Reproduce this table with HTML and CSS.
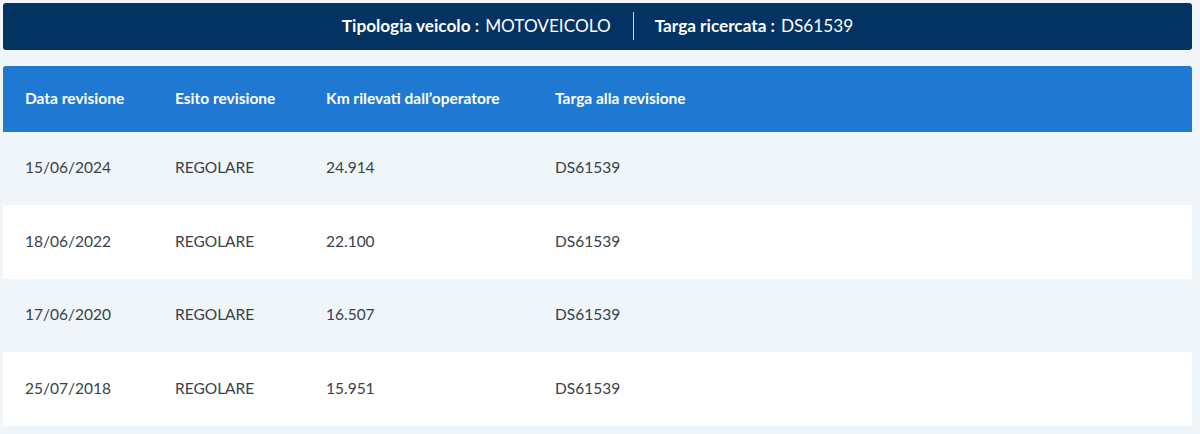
FILE: index.html
```html
<!DOCTYPE html>
<html lang="it">
<head>
<meta charset="utf-8">
<title>Revisioni</title>
<link rel="stylesheet" href="styles.css">
</head>
<body>
<div class="page">
  <div class="summary">
    <div class="summary-item"><span class="label">Tipologia veicolo :</span><span class="value">MOTOVEICOLO</span></div>
    <div class="divider"></div>
    <div class="summary-item"><span class="label">Targa ricercata :</span><span class="value">DS61539</span></div>
  </div>
  <div class="table">
    <div class="row head">
      <div class="cell">Data revisione</div>
      <div class="cell">Esito revisione</div>
      <div class="cell">Km rilevati dall’operatore</div>
      <div class="cell">Targa alla revisione</div>
    </div>
    <div class="row odd">
      <div class="cell">15/06/2024</div>
      <div class="cell">REGOLARE</div>
      <div class="cell">24.914</div>
      <div class="cell">DS61539</div>
    </div>
    <div class="row even">
      <div class="cell">18/06/2022</div>
      <div class="cell">REGOLARE</div>
      <div class="cell">22.100</div>
      <div class="cell">DS61539</div>
    </div>
    <div class="row odd">
      <div class="cell">17/06/2020</div>
      <div class="cell">REGOLARE</div>
      <div class="cell">16.507</div>
      <div class="cell">DS61539</div>
    </div>
    <div class="row even">
      <div class="cell">25/07/2018</div>
      <div class="cell">REGOLARE</div>
      <div class="cell">15.951</div>
      <div class="cell">DS61539</div>
    </div>
  </div>
</div>
</body>
</html>
```
FILE: styles.css
```css
html, body {
  margin: 0;
  padding: 0;
  background: #f0f5fa;
}
body {
  font-family: "Lato", "Noto Sans", sans-serif;
  color: #37414b;
}
.page {
  padding: 3px 8px 0 3px;
  display: flex;
  flex-direction: column;
}
.summary {
  height: 47px;
  box-sizing: border-box;
  padding-bottom: 2px;
  background: #043263;
  border-radius: 3px;
  display: flex;
  align-items: center;
  justify-content: center;
  color: #ffffff;
  font-size: 17.2px;
}
.summary-item {
  white-space: nowrap;
}
.label {
  font-weight: 700;
}
.value {
  margin-left: 6px;
}
.divider {
  width: 1px;
  height: 28px;
  background: #cfd8e3;
  margin: 0 21px 0 22px;
}
.table {
  margin-top: 16px;
  display: flex;
  flex-direction: column;
}
.row {
  display: grid;
  grid-template-columns: 150px 151px 229px 1fr;
  align-items: center;
  padding-left: 22px;
  padding-bottom: 3px;
  box-sizing: border-box;
  font-size: 15.5px;
}
.head {
  height: 66px;
  background: #1f78d2;
  color: #ffffff;
  font-weight: 700;
  border-radius: 3px 3px 0 0;
}
.odd {
  height: 73px;
  background: #f0f5fa;
}
.even {
  height: 74px;
  background: #ffffff;
}
```
